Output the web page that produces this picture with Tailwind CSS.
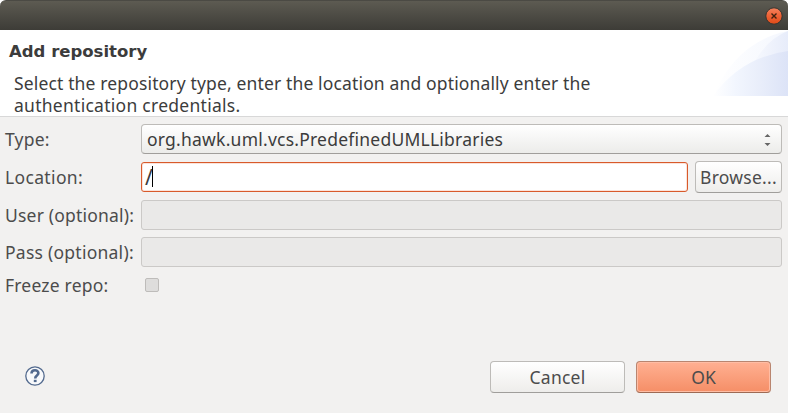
<!DOCTYPE html>
<html lang="en">
<head>
<meta charset="utf-8">
<title>Add repository</title>
<script src="https://cdn.jsdelivr.net/npm/@tailwindcss/browser@4"></script>
</head>
<body class="bg-white">
<main class="flex h-[413px] w-[788px] flex-col overflow-hidden bg-[#f2f1f0] font-['Noto_Sans',sans-serif] text-[17.5px] leading-[22px] text-[#4c4c4c]">
  <div class="h-[30px] shrink-0 bg-white">
    <div class="flex h-[30px] items-center justify-end rounded-t-[6px] border-t border-[#4b4a44] bg-linear-to-b from-[#5d5b52] to-[#3d3c37] pr-[5px]">
      <svg class="size-[18px]" viewBox="0 0 18 18" aria-label="Close">
        <defs><linearGradient id="c" x2="0" y2="1"><stop stop-color="#f4835f"/><stop offset=".5" stop-color="#ef6134"/><stop offset="1" stop-color="#de4b18"/></linearGradient></defs>
        <circle cx="9" cy="9" r="8.2" fill="url(#c)" stroke="#35342f" stroke-width="1"/>
        <path d="M6.5 6.5l5 5m0-5l-5 5" stroke="#40210f" stroke-width="1.4"/>
      </svg>
    </div>
  </div>
  <header class="flex h-[87px] shrink-0 justify-between border-b border-[#d8d8d8] bg-white text-[#3c3c3c]">
    <div class="pt-[11px] pl-[9px]">
      <h1 class="font-['DejaVu_Sans',sans-serif] text-[16.5px] leading-[22px] font-bold"><span>Add repository</span></h1>
      <p class="mt-[9px] ml-[5px] whitespace-nowrap"><span class="tracking-[0.145px]">Select the repository type, enter the location and optionally enter the</span><br><span class="tracking-[0.27px]">authentication credentials.</span></p>
    </div>
    <svg class="h-[66px] w-[75px]" viewBox="0 0 75 66">
      <defs>
        <linearGradient id="a" gradientUnits="userSpaceOnUse" x1="0" x2="75" y1="0" y2="0"><stop stop-color="#fff"/><stop offset=".3" stop-color="#f2f6fe"/><stop offset=".65" stop-color="#e8edfa"/><stop offset="1" stop-color="#dce3f7"/></linearGradient>
        <linearGradient id="b" gradientUnits="userSpaceOnUse" x1="0" x2="75" y1="0" y2="0"><stop stop-color="#fff"/><stop offset="1" stop-color="#f4f7fe"/></linearGradient>
        <linearGradient id="d" gradientUnits="userSpaceOnUse" x1="40" x2="75" y1="0" y2="0"><stop stop-color="#f7f9fe"/><stop offset="1" stop-color="#e7ecfa"/></linearGradient>
      </defs>
      <path d="M0 66Q24 11 75 1V66Z" fill="url(#b)"/>
      <path d="M41 33Q54 9 75 1V40H41Z" fill="url(#d)"/>
      <path d="M0 66Q28 27 75 21V66Z" fill="url(#a)"/>
    </svg>
  </header>
  <form class="grid grid-cols-[136px_641px] grid-rows-[30px_32px_30px_30px_24px] gap-y-[7px] pt-[7px] pl-[5px]">
    <label class="pt-[4px] whitespace-nowrap"><span class="tracking-[0.2px]">Type:</span></label>
    <div class="flex h-[30px] justify-between rounded-[4px] border border-[#bdbbb8] border-b-[#a09e9b] bg-linear-to-b from-white to-[#ececea] pt-[3px] pr-[10px] pl-[5px] text-[#3c3c3c]">
      <span class="tracking-[0.23px]">org.hawk.uml.vcs.PredefinedUMLLibraries</span>
      <svg class="mt-[5px] h-[14px] w-[7px]" viewBox="0 0 7 14" fill="#666"><path d="M.5 4L3.5 1L6.5 4ZM.5 10L3.5 13L6.5 10Z"/></svg>
    </div>
    <label class="pt-[5px] whitespace-nowrap"><span class="tracking-[0.35px]">Location:</span></label>
    <div class="flex gap-[7px]">
      <div class="mt-px flex h-[30px] w-[547px] rounded-[3px] border border-[#d85a2b] bg-white pt-[3px] pl-[3px] text-[#3c3c3c] shadow-[inset_0_0_0_1px_#fbe3da]"><span class="text-[21px]">/</span><i class="-ml-px block h-[21px] w-px bg-black"></i></div>
      <button type="button" class="h-[32px] w-[87px] rounded-[4px] border border-[#bdbbb8] border-b-[#a09e9b] bg-linear-to-b from-white to-[#eeedeb] whitespace-nowrap"><span class="tracking-[0.25px]">Browse...</span></button>
    </div>
    <label class="pt-[4px] whitespace-nowrap"><span class="tracking-[0.2px]">User (optional):</span></label>
    <div class="h-[30px] rounded-[3px] border border-[#cbc9c7] bg-[#eae9e8]"></div>
    <label class="pt-[4px] whitespace-nowrap"><span class="tracking-[0.25px]">Pass (optional):</span></label>
    <div class="h-[30px] rounded-[3px] border border-[#cbc9c7] bg-[#eae9e8]"></div>
    <label class="whitespace-nowrap"><span class="tracking-[0.2px]">Freeze repo:</span></label>
    <div class="mt-[4px] ml-[4px] size-[14px] rounded-[2px] border border-[#bebcba] bg-[#dedddc]"></div>
  </form>
  <footer class="mt-auto flex h-[52px] shrink-0 pl-[25px]">
    <svg class="mt-[5px] size-[20px]" viewBox="0 0 20 20" fill="none" stroke="#536a8e"><circle cx="10" cy="10" r="9.2" stroke-width="1.3" fill="#f8f9fb"/><path d="M6.5 7.6C6.5 3.3 13.4 3.3 13.4 7.1C13.4 9.6 10.2 9.3 10.2 12.4" stroke-width="2.6"/><path d="M8.8 13.8h2.8v2.3H8.8z" fill="#536a8e" stroke="none"/></svg>
    <div class="ml-auto flex gap-[11px] pr-[17px]">
      <button type="button" class="h-[32px] w-[135px] rounded-[4px] border border-[#bdbbb8] border-b-[#a09e9b] bg-linear-to-b from-white to-[#eeedeb]"><span class="tracking-[0.25px]">Cancel</span></button>
      <button type="button" class="h-[32px] w-[135px] rounded-[4px] border border-[#b9856f] border-b-[#9e6a54] bg-linear-to-b from-[#ffb092] to-[#f58e66] shadow-[inset_0_0_0_1px_#ffbda4]"><span>OK</span></button>
    </div>
  </footer>
</main>
</body>
</html>
